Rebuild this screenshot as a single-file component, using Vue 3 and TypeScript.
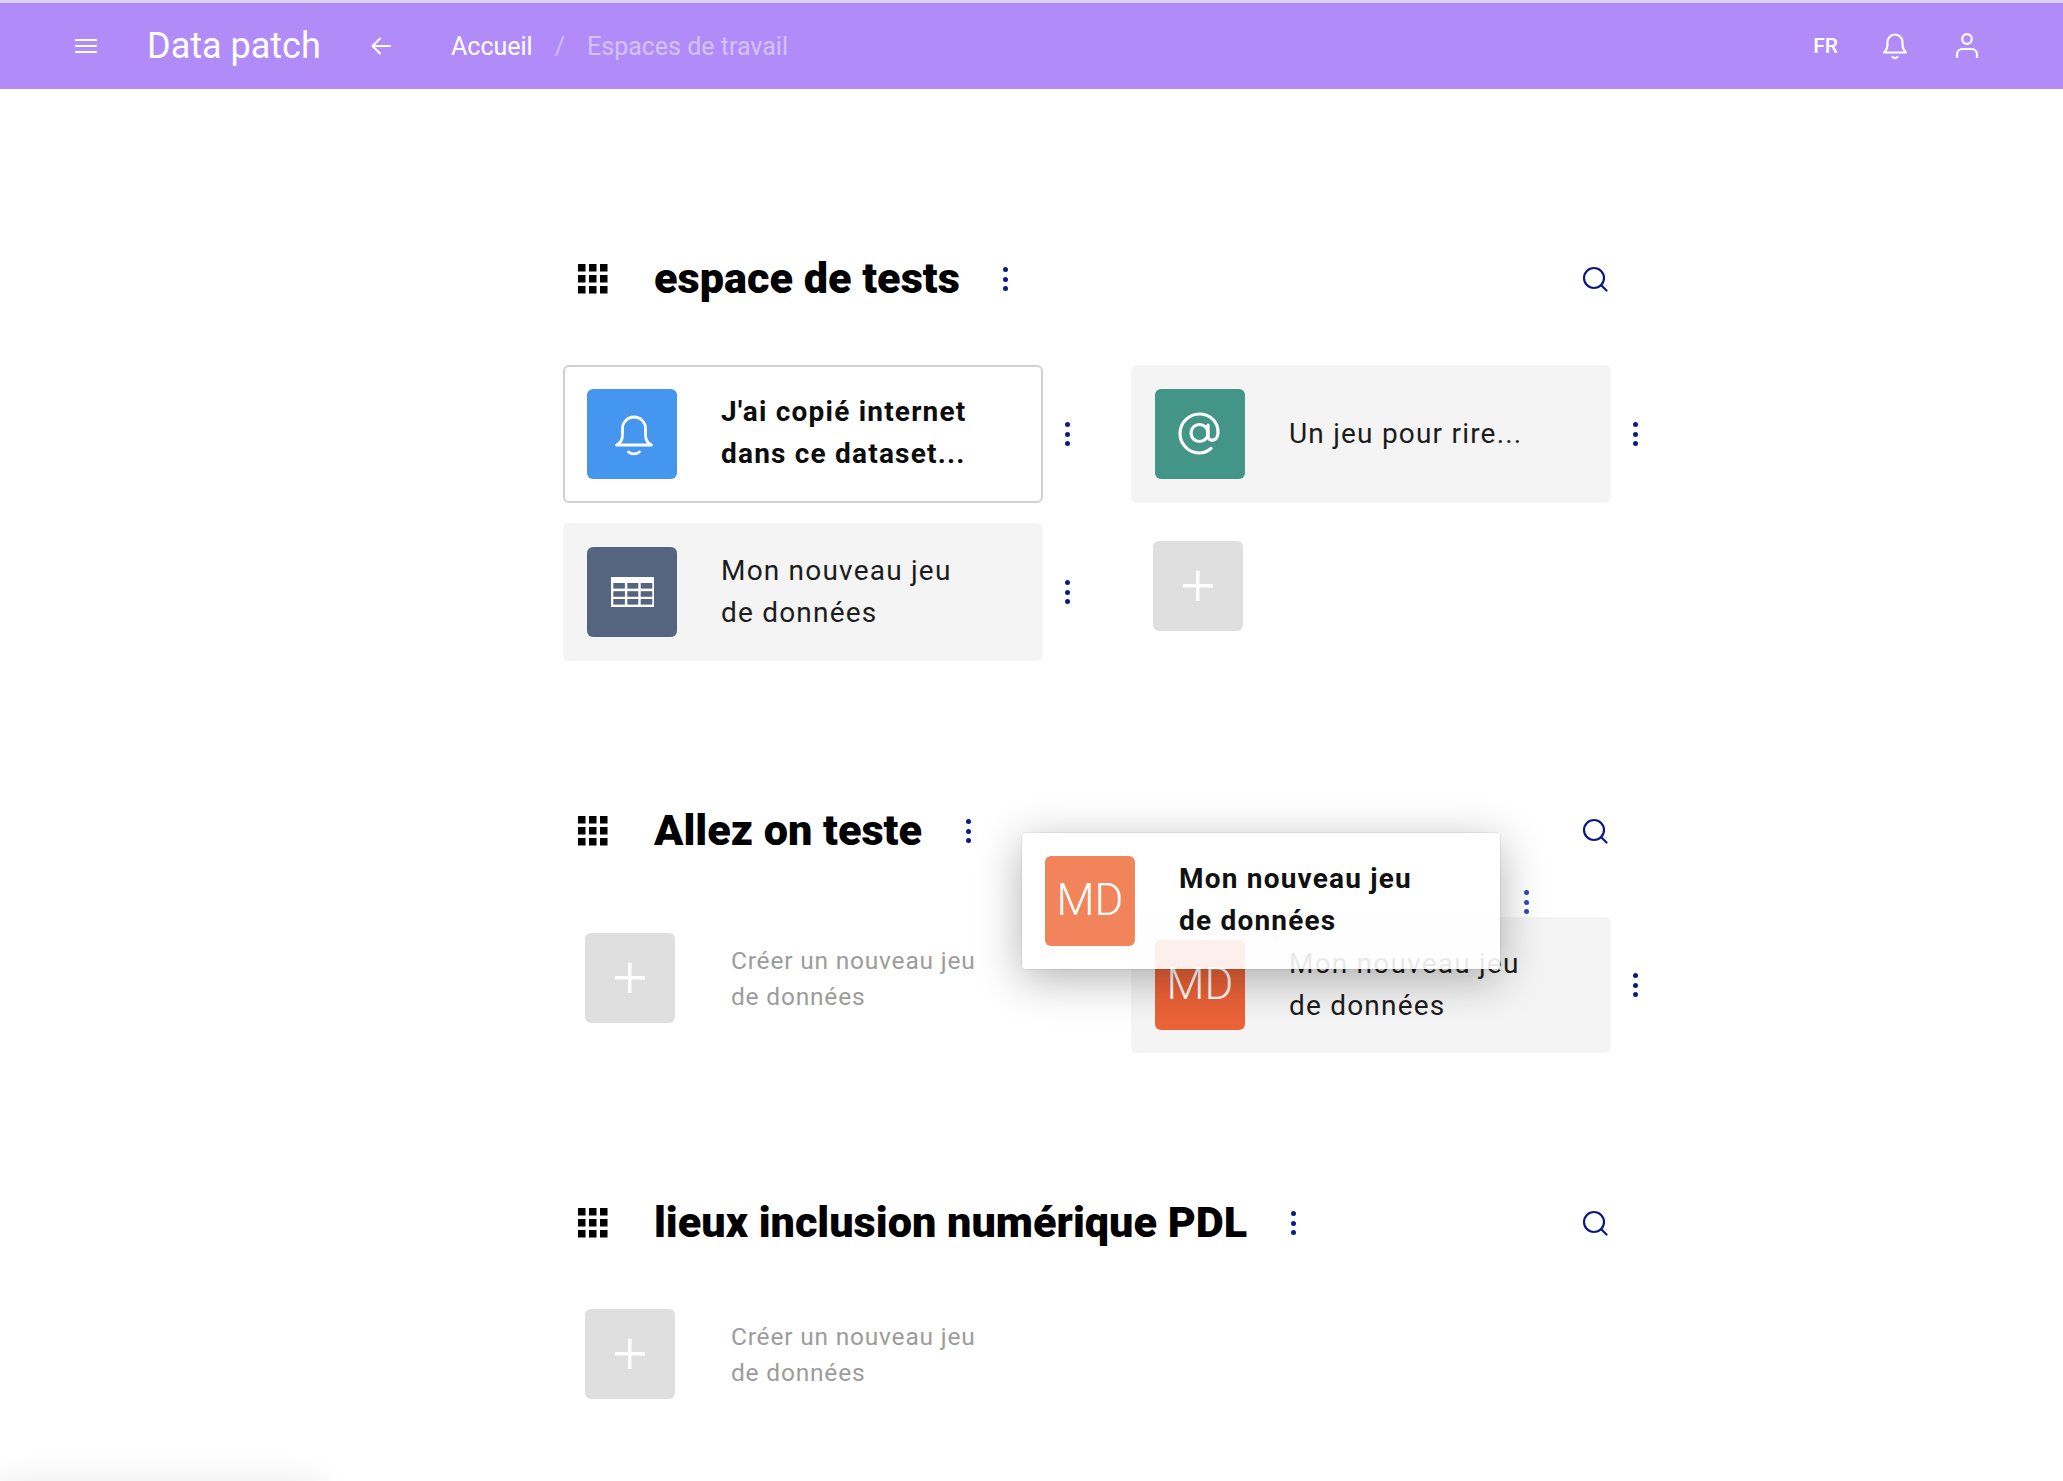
<script setup lang="ts">
type Tile = {
	title: string[];
	color: string;
	icon?: 'bell' | 'at' | 'table';
	initials?: string;
	active?: boolean;
};

type Space = {
	name: string;
	tiles: Tile[];
	addFirst?: boolean;
	compact?: boolean;
	tall?: boolean;
};

const spaces: Space[] = [
	{
		name: 'espace de tests',
		tall: true,
		tiles: [
			{ title: ["J'ai copié internet", 'dans ce dataset...'], color: '#4596ee', icon: 'bell', active: true },
			{ title: ['Un jeu pour rire...'], color: '#439587', icon: 'at' },
			{ title: ['Mon nouveau jeu', 'de données'], color: '#56657f', icon: 'table' },
		],
	},
	{
		name: 'Allez on teste',
		addFirst: true,
		tiles: [{ title: ['Mon nouveau jeu', 'de données'], color: '#eb6237', initials: 'MD' }],
	},
	{
		name: 'lieux inclusion numérique PDL',
		addFirst: true,
		compact: true,
		tiles: [],
	},
];

// cellules du tableau, dans le meme repere que le svg
const tableCells = [2.3, 16.3, 29.7].flatMap((x, i) =>
	[6, 14.2, 22].map((y) => ({ x, y, width: i === 1 ? 11 : 11.6, height: 5.6 })),
);
</script>

<template>
	<div class="page">
		<header class="topbar">
			<button class="bar-btn menu" aria-label="menu">
				<svg width="24" height="24" viewBox="0 0 24 24" fill="none" stroke="#fff" stroke-width="2"><path d="M1 6h22M1 12h22M1 18h22" /></svg>
			</button>
			<div class="brand">Data patch</div>
			<button class="bar-btn back" aria-label="retour">
				<svg width="24" height="24" viewBox="0 0 24 24" fill="none" stroke="#fff" stroke-width="2" stroke-linecap="round" stroke-linejoin="round"><path d="M21 12H3.500M11 4.500 3.500 12l7.500 7.500" /></svg>
			</button>
			<nav class="crumbs">
				<span>Accueil</span>
				<span class="crumbs__sep">/</span>
				<span class="crumbs__current">Espaces de travail</span>
			</nav>
			<div class="topbar__right">
				<span class="lang">FR</span>
				<svg class="bar-icon" width="28" height="30" viewBox="0 0 28 30" fill="none" stroke="#fff" stroke-width="2.200" stroke-linecap="round" stroke-linejoin="round"><path d="M3 21.500h22c-2.300-2-3.500-4-3.500-8.500V11a7.500 7.500 0 0 0-15 0v2c0 4.500-1.200 6.500-3.500 8.500Z" /><path d="M11.500 26c1.500 1.300 3.500 1.300 5 0" /></svg>
				<svg class="bar-icon" width="26" height="30" viewBox="0 0 26 30" fill="none" stroke="#fff" stroke-width="2.200" stroke-linecap="round"><circle cx="13" cy="8" r="4.800" /><path d="M3 26v-2.500c0-3.300 2.500-5.500 5.500-5.500h9c3 0 5.500 2.200 5.500 5.500V26" /></svg>
			</div>
		</header>

		<main class="content">
			<section v-for="space in spaces" :key="space.name" class="space">
				<div class="space__head">
					<svg class="space__grid" width="30" height="30" viewBox="0 0 30 30" fill="#000">
						<template v-for="row in 3" :key="row">
							<rect v-for="col in 3" :key="col" :x="(col - 1) * 11" :y="(row - 1) * 11" width="7.500" height="7.500" />
						</template>
					</svg>
					<h2 class="space__title">{{ space.name }}</h2>
					<button class="kebab kebab--head" aria-label="options"><i /><i /><i /></button>
					<svg class="space__search" width="26" height="26" viewBox="0 0 26 26" fill="none" stroke="#0b1a80" stroke-width="2.200" stroke-linecap="round"><circle cx="12" cy="12" r="10" /><path d="m19.500 19.500 5 5" /></svg>
				</div>

				<div class="tiles" :class="{ 'tiles--compact': space.compact, 'tiles--tall': space.tall }">
					<div v-if="space.addFirst" class="add-cell add-cell--labelled">
						<div class="add-tile"><span class="plus" /></div>
						<p class="add-label">Créer un nouveau jeu<br />de données</p>
					</div>
					<div v-for="tile in space.tiles" :key="tile.title[0]" class="cell">
						<div class="tile" :class="{ 'tile--active': tile.active }">
							<div class="tile__icon" :style="{ background: tile.color }">
								<span v-if="tile.initials" class="tile__initials">{{ tile.initials }}</span>
								<svg v-else-if="tile.icon === 'bell'" class="bell" width="42" height="42" viewBox="0 0 42 42" fill="none" stroke="#fff" stroke-width="2.800" stroke-linecap="round" stroke-linejoin="round"><path d="M3.500 30c3.500-1.500 6-5 6-10.500v-6a11.500 11.500 0 0 1 23 0v6c0 5.500 2.500 9 6 10.500Z" /><path d="M15.500 37c3 2.500 8 2.500 11 0" /></svg>
								<svg v-else-if="tile.icon === 'at'" width="44" height="44" viewBox="0 0 44 44" fill="none" stroke="#fff" stroke-width="3.200" stroke-linecap="round"><circle cx="21.500" cy="21" r="8.500" /><path d="M30 13v11c0 6 9.500 6 10-3 .6-11-8-19-18.500-19C11 2 2 10.500 2 21.500S11 41 21.500 41c4.500 0 8-1.500 11.500-4.500" /></svg>
								<svg v-else width="43" height="30" viewBox="0 0 43 30"><rect width="43" height="30" fill="#fff" /><rect v-for="cell in tableCells" :key="`${cell.x}-${cell.y}`" :x="cell.x" :y="cell.y" :width="cell.width" :height="cell.height" :fill="tile.color" /></svg>
							</div>
							<div class="tile__title">
								<div v-for="line in tile.title" :key="line">{{ line }}</div>
							</div>
						</div>
						<button class="kebab kebab--tile" aria-label="options"><i /><i /><i /></button>
					</div>
					<div v-if="!space.addFirst" class="add-cell">
						<div class="add-tile"><span class="plus" /></div>
					</div>
				</div>
			</section>

			<!-- carte en cours de glisser-deposer -->
			<div class="dragged">
				<div class="tile__icon dragged__icon"><span class="tile__initials">MD</span></div>
				<div class="tile__title">
					<div>Mon nouveau jeu</div>
					<div>de données</div>
				</div>
				<button class="kebab dragged__kebab" aria-label="options"><i /><i /><i /></button>
			</div>
		</main>
		<div class="corner-shadow" />
	</div>
</template>

<style>
html,
body {
	margin: 0;
	background: #fff;
	overflow: hidden;
}
</style>

<style scoped>
.page {
	position: relative;
	height: 1481px;
	overflow: hidden;
	font-family: Roboto, 'Liberation Sans', sans-serif;
	color: #1c1c1c;
}

button {
	border: 0;
	background: none;
	padding: 0;
}

.topbar {
	height: 86px;
	border-top: 3px solid #dcd3f3;
	background: #b18cf8;
	color: #fff;
	display: flex;
	align-items: center;
	padding-left: 74px;
	padding-right: 83px;
}

.bar-btn {
	display: flex;
	width: 24px;
	height: 24px;
}

.brand {
	margin-left: 49px;
	font-size: 36px;
	width: 222px;
}

.crumbs {
	margin-left: 58px;
	display: flex;
	font-size: 25px;
	gap: 22px;
}

.crumbs__sep {
	opacity: 0.4;
}

.crumbs__current {
	opacity: 0.45;
}

.topbar__right {
	margin-left: auto;
	display: flex;
	align-items: center;
}

.lang {
	font-size: 21px;
	font-weight: 500;
	margin-right: 43px;
}

.bar-icon + .bar-icon {
	margin-left: 45px;
}

.content {
	position: relative;
	margin-left: 563px;
	width: 1100px;
	padding-top: 160px;
}

.space + .space {
	margin-top: 140px;
}

.space__head {
	position: relative;
	height: 60px;
	display: flex;
	align-items: center;
	padding-left: 15px;
	width: 1048px;
	box-sizing: border-box;
}

.space__grid {
	flex: none;
}

.space__title {
	margin: -2px 0 0 46px;
	font-size: 43.2px;
	font-weight: 900;
	color: #000;
	white-space: nowrap;
}

.space__search {
	margin-left: auto;
	margin-right: 3px;
}

.tiles {
	margin-top: 56px;
	display: grid;
	grid-template-columns: 568px 568px;
	row-gap: 20px;
}

.tiles--tall .tile {
	height: 138px;
}

.tiles--compact .add-cell--labelled {
	padding-top: 0;
}

.cell {
	display: flex;
	align-items: center;
}

.tile {
	width: 480px;
	height: 136px;
	box-sizing: border-box;
	display: flex;
	align-items: center;
	padding-left: 24px;
	background: #f4f4f4;
	border-radius: 6px;
}

.tile--active {
	background: #fff;
	border: 2px solid #d0d0d0;
	padding-left: 22px;
}

.tile--active .tile__title {
	margin-top: -3px;
	font-weight: 700;
	color: #0d0d0d;
}

.tile__icon {
	flex: none;
	width: 90px;
	height: 90px;
	border-radius: 6px;
	display: flex;
	align-items: center;
	justify-content: center;
}

.bell {
	margin: 3px 0 0 3px;
}

.tile__initials {
	margin-top: -2px;
	color: #fff;
	font-size: 44px;
	font-weight: 300;
}

.tile__title {
	margin-left: 44px;
	font-size: 28px;
	line-height: 42px;
	letter-spacing: 1.2px;
	white-space: nowrap;
}

.kebab {
	display: flex;
	flex-direction: column;
	align-items: center;
	gap: 4.5px;
	width: 48px;
}

.kebab i {
	width: 5px;
	height: 5px;
	border-radius: 50%;
	background: #0a1b86;
}

.kebab--head {
	width: 24px;
	margin-left: 34px;
}

.add-cell {
	padding: 18px 0 0 22px;
}

.add-cell--labelled {
	display: flex;
	align-items: flex-start;
	padding-top: 16px;
}

.add-tile {
	width: 90px;
	height: 90px;
	border-radius: 6px;
	background: #dfdfdf;
	display: flex;
	align-items: center;
	justify-content: center;
}

.plus {
	position: relative;
	width: 30px;
	height: 30px;
	background:
		linear-gradient(#fff, #fff) center / 100% 3.5px no-repeat,
		linear-gradient(#fff, #fff) center / 3.5px 100% no-repeat;
}

.add-label {
	margin: 10px 0 0 56px;
	font-size: 24.5px;
	line-height: 36px;
	letter-spacing: 0.8px;
	color: #9c9c9c;
	white-space: nowrap;
}

.dragged {
	position: absolute;
	left: 459px;
	top: 744px;
	width: 478px;
	height: 136px;
	box-sizing: border-box;
	display: flex;
	align-items: center;
	padding-left: 23px;
	border-radius: 4px;
	background: rgba(255, 255, 255, 0.9);
	box-shadow:
		0 0 0 1px rgba(0, 0, 0, 0.06),
		0 10px 45px rgba(0, 0, 0, 0.3);
}

.dragged__icon {
	background: #f1845a;
}

.dragged .tile__title {
	margin-top: -3px;
	font-weight: 700;
	color: #111;
}

.dragged__kebab {
	position: absolute;
	right: -50px;
	top: 57px;
}

.dragged__kebab i {
	background: #2a44a8;
}

.corner-shadow {
	position: absolute;
	left: 0;
	bottom: -14px;
	width: 320px;
	height: 14px;
	box-shadow: 0 0 30px rgba(0, 0, 0, 0.12);
}
</style>
